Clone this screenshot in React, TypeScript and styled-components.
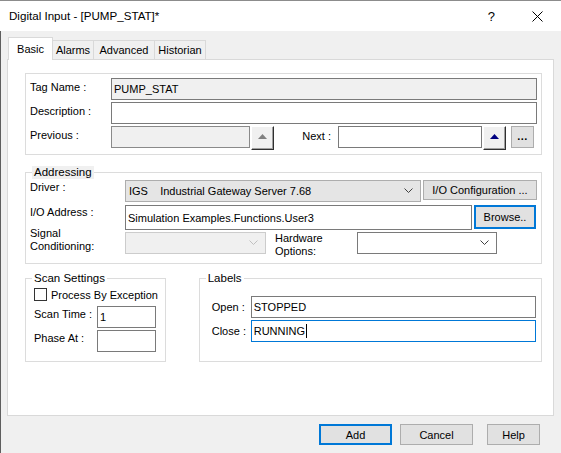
// Libraries
import styled, { createGlobalStyle, css } from 'styled-components';

const GlobalStyle = createGlobalStyle`
  html, body {
    margin: 0;
    padding: 0;
    background: #f0f0f0;
  }
  body {
    font-family: 'Liberation Sans', Arial, sans-serif;
    font-size: 11px;
    color: #000;
  }
  * {
    box-sizing: border-box;
  }
`;

type FieldTone = 'readonly' | 'plain' | 'focus' | 'disabled';

const tabs = ['Basic', 'Alarms', 'Advanced', 'Historian'];
const tabWidths = [45, 41, 61, 51];

const Chevron = ({ color = '#606060' }: { color?: string }) => (
  <svg width="9" height="6" viewBox="0 0 9 6">
    <polyline points="0.5,0.5 4.5,4.5 8.5,0.5" fill="none" stroke={color} strokeWidth="1" />
  </svg>
);

const Triangle = ({ color }: { color: string }) => (
  <svg width="9" height="5" viewBox="0 0 9 5">
    <polygon points="4.5,0 9,5 0,5" fill={color} />
  </svg>
);

const App = () => {
  return (
    <>
      <GlobalStyle />
      <Window>
        <TitleBar>
          <TitleText>Digital Input - [PUMP_STAT]*</TitleText>
          <TitleControls>
            <HelpGlyph>?</HelpGlyph>
            <svg width="11" height="11" viewBox="0 0 11 11">
              <path d="M0.5 0.5 L10.5 10.5 M10.5 0.5 L0.5 10.5" stroke="#000" strokeWidth="1" />
            </svg>
          </TitleControls>
        </TitleBar>

        <Body>
          <TabStrip>
            {tabs.map((tab, i) => (
              <Tab key={tab} $active={i === 0} $width={tabWidths[i]}>
                {tab}
              </Tab>
            ))}
          </TabStrip>

          <Panel>
            {/* Tag */}
            <TagGroup>
              <TagRow>
                <TagLabel>Tag Name :</TagLabel>
                <Field $tone="readonly" $width={426}>
                  PUMP_STAT
                </Field>
              </TagRow>
              <TagRow>
                <TagLabel>Description :</TagLabel>
                <Field $tone="plain" $width={426} />
              </TagRow>
              <TagRow>
                <TagLabel>Previous :</TagLabel>
                <Field $tone="disabled" $width={139} />
                <ArrowButton>
                  <Triangle color="#808080" />
                </ArrowButton>
                <NextLabel>Next :</NextLabel>
                <Field $tone="plain" $width={144} />
                <ArrowButton>
                  <Triangle color="#000080" />
                </ArrowButton>
                <EllipsisButton>...</EllipsisButton>
              </TagRow>
            </TagGroup>

            {/* Addressing */}
            <AddressGroup>
              <Legend $shaded $offset={2}>
                Addressing
              </Legend>
              <AddrRow $height={22}>
                <AddrLabel>Driver :</AddrLabel>
                <Combo $tone="button" $width={296}>
                  <ComboText>IGS&nbsp;&nbsp;&nbsp;&nbsp;Industrial Gateway Server 7.68</ComboText>
                  <Chevron color="#404040" />
                </Combo>
                <PushButton $width={114} $height={20}>
                  I/O Configuration ...
                </PushButton>
              </AddrRow>
              <AddrRow $height={25}>
                <AddrLabel>I/O Address :</AddrLabel>
                <Field $tone="plain" $width={347} $height={25}>
                  Simulation Examples.Functions.User3
                </Field>
                <PushButton $width={62} $height={24} $default>
                  Browse..
                </PushButton>
              </AddrRow>
              <AddrRow $height={22}>
                <AddrLabel $lift={6}>
                  Signal
                  <br />
                  Conditioning:
                </AddrLabel>
                <Combo $tone="disabled" $width={141}>
                  <ComboText />
                  <Chevron color="#c0c0c0" />
                </Combo>
                <HardwareLabel>
                  Hardware
                  <br />
                  Options:
                </HardwareLabel>
                <Combo $tone="plain" $width={140}>
                  <ComboText />
                  <Chevron color="#404040" />
                </Combo>
              </AddrRow>
            </AddressGroup>

            {/* Scan settings + labels */}
            <LowerRow>
              <ScanGroup>
                <Legend $offset={-2}>Scan Settings</Legend>
                <CheckRow>
                  <CheckBox />
                  <span>Process By Exception</span>
                </CheckRow>
                <ScanRow>
                  <ScanLabel>Scan Time :</ScanLabel>
                  <Field $tone="plain" $width={59}>
                    1
                  </Field>
                </ScanRow>
                <ScanRow>
                  <ScanLabel>Phase At :</ScanLabel>
                  <Field $tone="plain" $width={59} />
                </ScanRow>
              </ScanGroup>

              <LabelsGroup>
                <Legend $offset={-6}>Labels</Legend>
                <StateRow>
                  <StateLabel>Open :</StateLabel>
                  <Field $tone="plain" $width={285}>
                    STOPPED
                  </Field>
                </StateRow>
                <StateRow>
                  <StateLabel>Close :</StateLabel>
                  <Field $tone="focus" $width={285}>
                    RUNNING
                    <Caret />
                  </Field>
                </StateRow>
              </LabelsGroup>
            </LowerRow>
          </Panel>

          <Footer>
            <PushButton $width={73} $height={21} $default>
              Add
            </PushButton>
            <PushButton $width={73} $height={21}>
              Cancel
            </PushButton>
            <PushButton $width={53} $height={21}>
              Help
            </PushButton>
          </Footer>
        </Body>
      </Window>
    </>
  );
};

export default App;

// Styled Components
const Window = styled.div`
  width: 561px;
  height: 453px;
  display: flex;
  flex-direction: column;
  background: #f0f0f0;
  overflow: hidden;
`;

const TitleBar = styled.div`
  height: 31px;
  display: flex;
  align-items: center;
  justify-content: space-between;
  padding: 0 18px 0 9px;
  background: #ffffff;
  border-top: 1px solid #8c8c8c;
`;

const TitleText = styled.span`
  font-size: 11.6px;
  color: #000;
  padding-bottom: 1px;
`;

const TitleControls = styled.div`
  display: flex;
  align-items: center;
  gap: 37px;
`;

const HelpGlyph = styled.span`
  font-size: 13px;
  color: #000;
`;

const Body = styled.div`
  flex: 1;
  display: flex;
  flex-direction: column;
  border-left: 1px solid #5e5e5e;
  padding-top: 6px;
`;

const TabStrip = styled.div`
  height: 23px;
  margin-bottom: -1px;
  padding-left: 7px;
  display: flex;
  align-items: flex-start;
`;

const Tab = styled.div<{ $active?: boolean; $width: number }>`
  position: relative;
  width: ${(p) => p.$width}px;
  text-align: center;
  line-height: 13px;
  color: #000;
  border-top: 1px solid #d9d9d9;
  border-right: 1px solid #d9d9d9;

  ${(p) =>
    p.$active
      ? css`
          z-index: 1;
          height: 23px;
          padding-top: 5px;
          background: #ffffff;
          border-left: 1px solid #d9d9d9;
        `
      : css`
          margin-top: 3px;
          height: 19px;
          padding-top: 3px;
          background: #f0f0f0;
        `}
`;

const Panel = styled.div`
  height: 357px;
  margin: 0 7px 0 6px;
  padding: 13px 11px 0 17px;
  background: #ffffff;
  border: 1px solid #d9d9d9;
  display: flex;
  flex-direction: column;
`;

const TagGroup = styled.div`
  display: flex;
  flex-direction: column;
  gap: 2px;
  padding: 4px 4px 6px 4px;
  border: 1px solid #dcdcdc;
`;

const TagRow = styled.div`
  height: 22px;
  display: flex;
  align-items: flex-start;
`;

const TagLabel = styled.span`
  width: 81px;
  flex-shrink: 0;
  line-height: 13px;
  padding-top: 3px;
`;

const NextLabel = styled.span`
  width: 64px;
  flex-shrink: 0;
  text-align: right;
  padding-right: 7px;
  line-height: 13px;
  padding-top: 4px;
`;

const fieldTones = {
  readonly: css`
    background: #f0f0f0;
    border: 1px solid #7a7a7a;
  `,
  plain: css`
    background: #ffffff;
    border: 1px solid #7a7a7a;
  `,
  focus: css`
    background: #ffffff;
    border: 1px solid #0078d7;
  `,
  disabled: css`
    background: #f0f0f0;
    border: 1px solid #8a8a8a;
  `,
};

const Field = styled.div<{ $tone: FieldTone; $width: number; $height?: number }>`
  width: ${(p) => p.$width}px;
  height: ${(p) => p.$height ?? 22}px;
  flex-shrink: 0;
  display: flex;
  align-items: center;
  padding: 0 2px;
  font-size: 11px;
  white-space: nowrap;
  overflow: hidden;
  ${(p) => fieldTones[p.$tone]}
`;

const Caret = styled.span`
  display: inline-block;
  width: 1px;
  height: 14px;
  margin-left: 1px;
  background: #000;
`;

const ArrowButton = styled.div`
  width: 23px;
  height: 24px;
  margin-left: 1px;
  flex-shrink: 0;
  display: flex;
  align-items: center;
  justify-content: center;
  padding-bottom: 4px;
  background: #f0f0f0;
  border-top: 1px solid #ffffff;
  border-left: 1px solid #ffffff;
  border-right: 1px solid #303030;
  border-bottom: 1px solid #303030;
  box-shadow: inset -1px -1px 0 #a0a0a0;
`;

const EllipsisButton = styled.div`
  width: 23px;
  height: 22px;
  margin-left: 5px;
  flex-shrink: 0;
  display: flex;
  align-items: center;
  justify-content: center;
  padding-bottom: 3px;
  font-weight: bold;
  letter-spacing: 0.5px;
  background: #e1e1e1;
  border: 1px solid #adadad;
`;

const Group = styled.fieldset`
  margin: 0;
  min-width: 0;
  border: 1px solid #dcdcdc;
  display: flex;
  flex-direction: column;
`;

const Legend = styled.legend<{ $shaded?: boolean; $offset: number }>`
  margin-left: ${(p) => p.$offset}px;
  padding: 0 2px;
  line-height: 13px;
  font-size: 11.5px;
  background: ${(p) => (p.$shaded ? '#f0f0f0' : 'transparent')};
`;

const AddressGroup = styled(Group)`
  margin-top: 11px;
  padding: 1px 4px 7px 4px;
`;

const AddrRow = styled.div<{ $height: number }>`
  height: ${(p) => p.$height}px;
  display: flex;
  align-items: flex-start;
  margin-bottom: 2px;

  &:first-of-type {
    margin-bottom: 3px;
  }
`;

const AddrLabel = styled.span<{ $lift?: number }>`
  width: 95px;
  flex-shrink: 0;
  line-height: 13px;
  padding-top: 1px;
  margin-top: ${(p) => (p.$lift ? -p.$lift : 0)}px;
`;

const HardwareLabel = styled.span`
  width: 82px;
  margin-left: 9px;
  flex-shrink: 0;
  line-height: 13px;
  margin-top: 0;
`;

const comboTones = {
  button: css`
    background: #e5e5e5;
    border: 1px solid #adadad;
  `,
  plain: css`
    background: #ffffff;
    border: 1px solid #7a7a7a;
  `,
  disabled: css`
    background: #f0f0f0;
    border: 1px solid #cccccc;
  `,
};

const Combo = styled.div<{ $tone: 'button' | 'plain' | 'disabled'; $width: number }>`
  width: ${(p) => p.$width}px;
  height: 22px;
  flex-shrink: 0;
  display: flex;
  align-items: center;
  padding: 0 7px 0 3px;
  ${(p) => comboTones[p.$tone]}
`;

const ComboText = styled.span`
  flex: 1;
  white-space: nowrap;
  overflow: hidden;
`;

const PushButton = styled.div<{ $width: number; $height: number; $default?: boolean }>`
  width: ${(p) => p.$width}px;
  height: ${(p) => p.$height}px;
  flex-shrink: 0;
  display: flex;
  align-items: center;
  justify-content: center;
  margin-left: 2px;
  font-size: 11px;
  background: #e1e1e1;
  border: ${(p) => (p.$default ? '2px solid #0078d7' : '1px solid #adadad')};
`;

const LowerRow = styled.div`
  display: flex;
  align-items: stretch;
  gap: 33px;
  margin-top: 8px;
`;

const ScanGroup = styled(Group)`
  width: 141px;
  padding: 1px 8px 7px 8px;
`;

const CheckRow = styled.div`
  display: flex;
  align-items: center;
  gap: 4px;
  height: 17px;
  margin-bottom: 3px;
  white-space: nowrap;
`;

const CheckBox = styled.span`
  width: 13px;
  height: 13px;
  flex-shrink: 0;
  background: #ffffff;
  border: 1px solid #333333;
`;

const ScanRow = styled.div`
  display: flex;
  align-items: flex-start;
  height: 22px;
  margin-bottom: 2px;
`;

const ScanLabel = styled.span`
  width: 63px;
  flex-shrink: 0;
  line-height: 13px;
  padding-top: 2px;
`;

const LabelsGroup = styled(Group)`
  width: 344px;
  padding: 11px 6px 7px 12px;
  gap: 2px;
`;

const StateRow = styled.div`
  display: flex;
  align-items: center;
  height: 22px;
`;

const StateLabel = styled.span`
  width: 39px;
  flex-shrink: 0;
`;

const Footer = styled.div`
  display: flex;
  justify-content: flex-end;
  margin-top: 8px;
  padding-right: 21px;

  & > div + div {
    margin-left: 8px;
  }
  & > div:last-child {
    margin-left: 14px;
  }
`;
